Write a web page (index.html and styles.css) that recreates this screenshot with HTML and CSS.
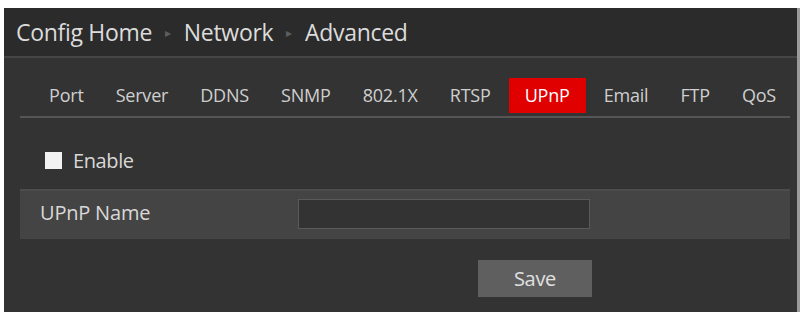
FILE: index.html
```html
<!DOCTYPE html>
<html lang="en">

<head>
    <meta charset="UTF-8">
    <meta name="viewport" content="width=device-width, initial-scale=1.0">
    <title>UPnP</title>
    <link rel="stylesheet" href="styles.css">
</head>

<body>
    <div class="config">
        <div class="config-head">
            <span>Config Home</span>
            <span class="arrow">&#9656;</span>
            <span>Network</span>
            <span class="arrow">&#9656;</span>
            <span>Advanced</span>
        </div>
        <div class="config-main">
            <div class="tabs">
                <div class="tab">Port</div>
                <div class="tab">Server</div>
                <div class="tab">DDNS</div>
                <div class="tab">SNMP</div>
                <div class="tab">802.1X</div>
                <div class="tab">RTSP</div>
                <div class="tab active">UPnP</div>
                <div class="tab">Email</div>
                <div class="tab">FTP</div>
                <div class="tab">QoS</div>
            </div>
            <label class="enable"><span class="check"></span>Enable</label>
            <div class="row">
                <div class="row-label">UPnP Name</div>
                <div class="row-value"><input type="text"></div>
            </div>
            <div class="actions">
                <div class="btn">Save</div>
            </div>
        </div>
    </div>
</body>

</html>
```

FILE: styles.css
```css
body {
    margin: 0;
    background: #fff;
    font-family: "Open Sans", "Noto Sans", sans-serif;
}

.config {
    box-sizing: border-box;
    margin: 8px 0 0 4px;
    width: 796px;
    height: 304px;
    background: #333333;
    border-right: 3px solid #9a9a9a;
    color: #d8d8d8;
}

.config .config-head {
    box-sizing: border-box;
    height: 50px;
    background: #2b2b2b;
    border-bottom: 2px solid #454545;
    padding-left: 12px;
    display: flex;
    align-items: center;
    gap: 13px;
    font-size: 23px;
    letter-spacing: -0.3px;
    color: #dcdcdc;
}

.config .config-head .arrow {
    font-size: 12px;
    color: #5e5e5e;
}

.config .config-main {
    padding: 0 7px 0 16px;
}

.config .tabs {
    display: flex;
    height: 55px;
    align-items: flex-end;
    padding: 0 0 3px 13px;
    border-bottom: 2px solid #555;
    font-size: 18px;
    letter-spacing: -0.2px;
}

.config .tabs .tab {
    height: 35px;
    line-height: 35px;
    padding: 0 16px;
    color: #cfcfcf;
}

.config .tabs .tab.active {
    background: #e00000;
    color: #fff;
    padding: 0 16px;
    margin: 0 2px;
}

.config .enable {
    display: flex;
    align-items: center;
    height: 34px;
    margin: 25px 0 0 25px;
    font-size: 20px;
    letter-spacing: -0.4px;
}

.config .enable .check {
    width: 17px;
    height: 17px;
    background: #f2f2f2;
    margin-right: 11px;
}

.config .row {
    display: flex;
    height: 50px;
    margin-top: 12px;
    background: #444444;
    border-top: 2px solid #4c4c4c;
    box-sizing: border-box;
}

.config .row .row-label {
    width: 278px;
    padding-left: 20px;
    box-sizing: border-box;
    line-height: 44px;
    font-size: 20px;
    letter-spacing: -0.2px;
}

.config .row .row-value {
    padding-top: 8px;
}

.config .row input {
    box-sizing: border-box;
    width: 292px;
    height: 30px;
    background: #333;
    border: 1px solid #5a5a5a;
    outline: none;
}

.config .actions {
    padding: 21px 0 0 458px;
}

.config .btn {
    width: 114px;
    height: 37px;
    line-height: 37px;
    text-align: center;
    background: #5f5f5f;
    color: #e0e0e0;
    font-size: 20px;
    letter-spacing: -0.3px;
}
```
